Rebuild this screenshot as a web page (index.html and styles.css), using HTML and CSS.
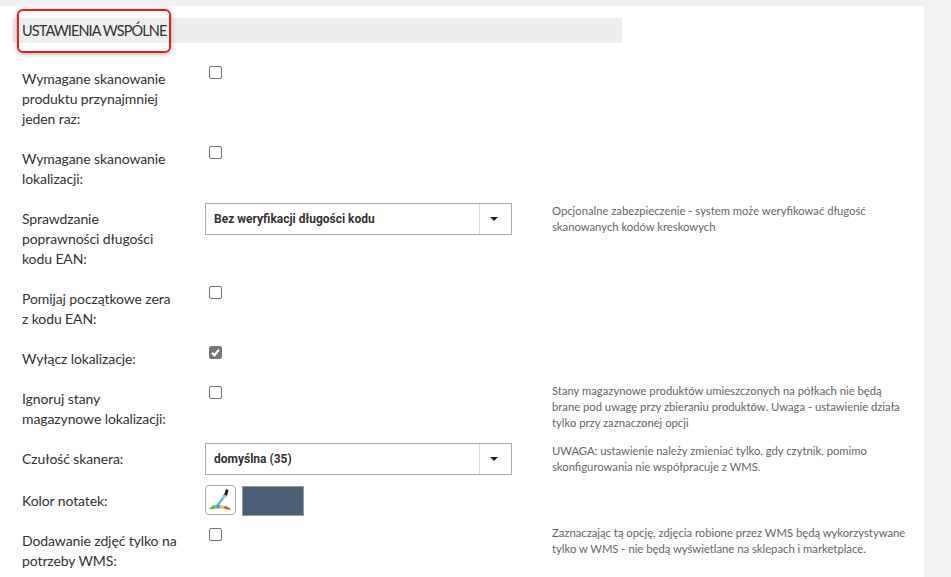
FILE: index.html
```html
<!DOCTYPE html>
<html>
<head>
	<meta charset="utf-8">
	<title>Ustawienia</title>
	<link rel="stylesheet" href="styles.css">
</head>
<body>
	<main class="panel">
		<div class="naglowek">
			<h2>USTAWIENIA WSPÓLNE</h2>
			<div class="ramka"></div>
		</div>

		<div class="wiersz">
			<label class="etykieta">Wymagane skanowanie produktu przynajmniej jeden raz:</label>
			<div class="pole"><span class="check"></span></div>
		</div>

		<div class="wiersz">
			<label class="etykieta">Wymagane skanowanie lokalizacji:</label>
			<div class="pole"><span class="check"></span></div>
		</div>

		<div class="wiersz">
			<label class="etykieta">Sprawdzanie<br>poprawności długości kodu EAN:</label>
			<div class="pole">
				<div class="select">
					<span class="select-tekst">Bez weryfikacji długości kodu</span>
					<span class="select-strzalka"></span>
				</div>
			</div>
			<p class="pomoc">Opcjonalne zabezpieczenie - system może weryfikować długość skanowanych kodów kreskowych</p>
		</div>

		<div class="wiersz">
			<label class="etykieta">Pomijaj początkowe zera z kodu EAN:</label>
			<div class="pole"><span class="check"></span></div>
		</div>

		<div class="wiersz">
			<label class="etykieta">Wyłącz lokalizacje:</label>
			<div class="pole">
				<span class="check zaznaczony">
					<svg width="13" height="13" viewBox="0 0 13 13"><path d="M3 6.8 5.4 9.4 10 3.6" fill="none" stroke="#fff" stroke-width="2.2"/></svg>
				</span>
			</div>
		</div>

		<div class="wiersz">
			<label class="etykieta">Ignoruj stany magazynowe lokalizacji:</label>
			<div class="pole"><span class="check"></span></div>
			<p class="pomoc">Stany magazynowe produktów umieszczonych na półkach nie będą brane pod uwagę przy zbieraniu produktów. Uwaga - ustawienie działa tylko przy zaznaczonej opcji</p>
		</div>

		<div class="wiersz">
			<label class="etykieta">Czułość skanera:</label>
			<div class="pole">
				<div class="select">
					<span class="select-tekst">domyślna (35)</span>
					<span class="select-strzalka"></span>
				</div>
			</div>
			<p class="pomoc">UWAGA: ustawienie należy zmieniać tylko, gdy czytnik, pomimo skonfigurowania nie współpracuje z WMS.</p>
		</div>

		<div class="wiersz wiersz-kolor">
			<label class="etykieta">Kolor notatek:</label>
			<div class="pole kolor">
				<span class="kolor-btn">
					<svg width="29" height="28" viewBox="0 0 29 28">
						<path d="M20 3 22.5 4 21 10 18 9Z" fill="#222"/>
						<path d="M17 8 21 10 19.5 12 16 10.5Z" fill="#a9bccb"/>
						<path d="M16.5 11 18.5 12 13 19.5 10.5 18.5Z" fill="#5cb8e0"/>
						<path d="M3 23 C5 20.5 7 19.5 9 19 L10 22.5 C7.5 23 5 23.5 3 23Z" fill="#6cbb45"/>
						<path d="M9 19 C10.5 18.5 12.5 18.5 14 19 L14.5 22.5 C13 22.5 11.5 22.5 10 22.5Z" fill="#4aa8d8"/>
						<path d="M14 19 C15.5 19 17 19.5 18 20 L18.5 23 C17 22.8 15.5 22.6 14.5 22.5Z" fill="#e8c23a"/>
						<path d="M18 20 C21 20 23 21 25 24 C23 23.8 20.5 23.4 18.5 23Z" fill="#e2503a"/>
					</svg>
				</span>
				<span class="kolor-probka"></span>
			</div>
		</div>

		<div class="wiersz">
			<label class="etykieta">Dodawanie zdjęć tylko na potrzeby WMS:</label>
			<div class="pole"><span class="check"></span></div>
			<p class="pomoc">Zaznaczając tą opcję, zdjęcia robione przez WMS będą wykorzystywane tylko w WMS - nie będą wyświetlane na sklepach i marketplace.</p>
		</div>
	</main>
</body>
</html>
```

FILE: styles.css
```css
html, body{
	height: 100%;
}
body{
	margin: 0;
	background: #f1f1f1;
	font-family: 'Lato', sans-serif;
	overflow: hidden;
}
/*--------Panel-----------*/
.panel{
	box-sizing: border-box;
	width: 924px;
	height: 571px;
	margin-top: 6px;
	padding: 12px 0 0 12px;
	background: #fff;
}
.naglowek{
	position: relative;
	width: 610px;
	height: 25px;
	margin-bottom: 20px;
	background: #eee;
}
.naglowek h2{
	margin: 0;
	padding-left: 10px;
	font-size: 14.5px;
	font-weight: 400;
	letter-spacing: -0.9px;
	line-height: 25px;
	color: #333;
}
.ramka{
	position: absolute;
	left: 5px;
	top: -9px;
	width: 150px;
	height: 40px;
	border: 2px solid #f01a1a;
	border-radius: 6px;
	box-shadow: 0 1px 5px rgba(0,0,0,.3);
}
/*--------Wiersze-----------*/
.wiersz{
	display: flex;
	align-items: flex-start;
	padding-left: 10px;
}
.wiersz-kolor{
	margin-top: 2px;
}
.etykieta{
	width: 158px;
	margin-right: 25px;
	padding-top: 6px;
	margin-bottom: 14px;
	font-size: 14px;
	letter-spacing: -0.1px;
	line-height: 20px;
	color: #333;
}
.pole{
	width: 307px;
	flex-shrink: 0;
	margin-right: 40px;
}
.pomoc{
	width: 356px;
	margin: 0;
	font-size: 11.25px;
	line-height: 16px;
	color: #666;
}
/*--------Kontrolki-----------*/
.check{
	display: block;
	box-sizing: border-box;
	width: 13px;
	height: 13px;
	margin: 3px 0 0 4px;
	border: 1px solid #767676;
	border-radius: 2px;
	background: #fff;
}
.check.zaznaczony{
	border: 0;
	background: #767676;
}
.check svg{
	display: block;
}
.select{
	display: flex;
	box-sizing: border-box;
	height: 32px;
	border: 1px solid #aaa;
	background: #fff;
}
.select-tekst{
	flex: 1;
	padding-left: 8px;
	font-family: 'Roboto', sans-serif;
	font-size: 12px;
	font-weight: 700;
	line-height: 30px;
	color: #333;
}
.select-strzalka{
	position: relative;
	width: 31px;
	border-left: 1px solid #ddd;
}
.select-strzalka::after{
	content: "";
	position: absolute;
	left: 10px;
	top: 13px;
	border-style: solid;
	border-width: 4px 4px 0;
	border-color: #222 transparent transparent;
}
.kolor{
	display: flex;
	gap: 6px;
}
.kolor-btn{
	box-sizing: border-box;
	width: 31px;
	height: 30px;
	border: 1px solid #aaa;
	border-radius: 4px;
}
.kolor-btn svg{
	display: block;
}
.kolor-probka{
	box-sizing: border-box;
	width: 62px;
	height: 30px;
	margin-top: 1px;
	border: 1px solid #999;
	background: #4a6074;
}
```
